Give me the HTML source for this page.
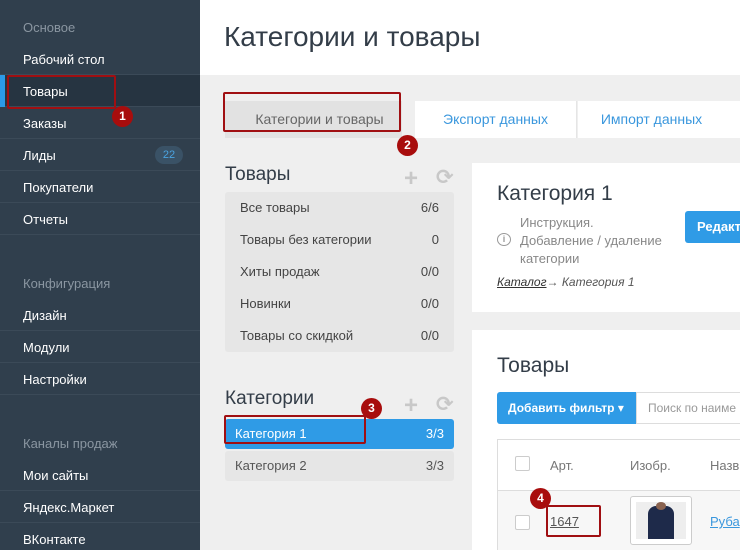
<!DOCTYPE html>
<html style="overflow:hidden;width:740px;height:550px"><head><meta charset="utf-8"><style>
*{margin:0;padding:0;box-sizing:border-box}
body{width:740px;height:550px;overflow:hidden;font-family:"Liberation Sans","DejaVu Sans",sans-serif;background:#efefef;position:relative;font-size:13px}
.a{position:absolute}
#sb{left:0;top:0;width:200px;height:550px;background:#303f4d}
.si{position:absolute;left:0;width:200px;height:32px;line-height:33px;padding-left:23px;color:#fff;font-size:13px;border-bottom:1px solid #3b4a58}
.sh{position:absolute;left:23px;color:#8a96a1;font-size:13px}
.red{position:absolute;border:2px solid #a00f12;border-radius:2px}
.badge{position:absolute;width:21px;height:21px;border-radius:50%;background:#a80d0d;color:#fff;font-weight:bold;font-size:12px;text-align:center;line-height:21px}
.row{position:absolute;left:0;width:229px;height:32px;line-height:32px;padding:0 15px;font-size:13px;color:#444;display:flex;justify-content:space-between}
</style></head><body>
<div id="sb" class="a">
<div class="sh" style="top:20px">Основое</div>
<div class="si" style="top:43px">Рабочий стол</div>
<div class="si" style="top:75px;background:#263441">Товары</div>
<div class="a" style="left:0;top:75px;width:5px;height:32px;background:#2b9ae8"></div>
<div class="si" style="top:107px">Заказы</div>
<div class="si" style="top:139px">Лиды</div>
<div class="a" style="left:155px;top:146px;width:28px;height:18px;border-radius:9px;background:#3a5266;color:#4aa3e0;font-size:11px;text-align:center;line-height:18px">22</div>
<div class="si" style="top:171px">Покупатели</div>
<div class="si" style="top:203px">Отчеты</div>
<div class="sh" style="top:276px">Конфигурация</div>
<div class="si" style="top:299px">Дизайн</div>
<div class="si" style="top:331px">Модули</div>
<div class="si" style="top:363px">Настройки</div>
<div class="sh" style="top:436px">Каналы продаж</div>
<div class="si" style="top:459px">Мои сайты</div>
<div class="si" style="top:491px">Яндекс.Маркет</div>
<div class="si" style="top:523px;border:none">ВКонтакте</div>
</div>
<div class="red" style="left:7px;top:75px;width:109px;height:34px"></div>
<div class="badge" style="left:112px;top:106px">1</div>

<div class="a" style="left:200px;top:0;width:540px;height:75px;background:#fff"></div>
<div class="a" style="left:224px;top:21px;font-size:28px;color:#333d48">Категории и товары</div>

<div class="a" style="left:225px;top:101px;width:177px;height:37px;background:#e2e2e2;color:#666;text-align:center;line-height:37px;font-size:14px;padding-left:12px">Категории и товары</div>
<div class="a" style="left:415px;top:101px;width:162px;height:37px;background:#fff;color:#3a97dd;text-align:center;line-height:37px;font-size:14px;border-right:1px solid #e5e5e5">Экспорт данных</div>
<div class="a" style="left:578px;top:101px;width:162px;height:37px;background:#fff;color:#3a97dd;text-align:center;line-height:37px;font-size:14px;padding-right:15px">Импорт данных</div>
<div class="red" style="left:223px;top:92px;width:178px;height:40px"></div>
<div class="badge" style="left:397px;top:135px">2</div>

<div class="a" style="left:225px;top:164px;font-size:19px;color:#333d48">Товары</div>
<div class="a" style="left:404px;top:167px;font-size:24px;line-height:24px;color:#c8c8c8;font-weight:bold">+</div>
<div class="a" style="left:436px;top:166px;font-size:21px;line-height:24px;color:#c8c8c8;font-weight:bold">⟳</div>
<div class="a" style="left:225px;top:192px;width:229px;height:160px;background:#e6e6e6;border-radius:3px">
<div class="row" style="top:0"><span>Все товары</span><span>6/6</span></div>
<div class="row" style="top:32px"><span>Товары без категории</span><span>0</span></div>
<div class="row" style="top:64px"><span>Хиты продаж</span><span>0/0</span></div>
<div class="row" style="top:96px"><span>Новинки</span><span>0/0</span></div>
<div class="row" style="top:128px"><span>Товары со скидкой</span><span>0/0</span></div>
</div>

<div class="a" style="left:225px;top:388px;font-size:19px;color:#333d48">Категории</div>
<div class="a" style="left:404px;top:394px;font-size:24px;line-height:24px;color:#c8c8c8;font-weight:bold">+</div>
<div class="a" style="left:436px;top:393px;font-size:21px;line-height:24px;color:#c8c8c8;font-weight:bold">⟳</div>
<div class="a" style="left:225px;top:419px;width:229px;height:30px;background:#2f9be6;border-radius:3px;color:#fff;font-size:13px;line-height:30px;padding:0 10px;display:flex;justify-content:space-between"><span>Категория 1</span><span>3/3</span></div>
<div class="a" style="left:225px;top:451px;width:229px;height:30px;background:#e6e6e6;border-radius:3px;color:#555;font-size:13px;line-height:30px;padding:0 10px;display:flex;justify-content:space-between"><span>Категория 2</span><span>3/3</span></div>
<div class="red" style="left:224px;top:415px;width:142px;height:29px"></div>
<div class="badge" style="left:361px;top:398px">3</div>

<div class="a" style="left:472px;top:163px;width:268px;height:149px;background:#fff"></div>
<div class="a" style="left:497px;top:182px;font-size:21px;color:#333d48">Категория 1</div>
<div class="a" style="left:520px;top:214px;font-size:13px;color:#888;line-height:18px">Инструкция.<br>Добавление / удаление<br>категории</div>
<div class="a" style="left:497px;top:233px;width:14px;height:13px;border:1.5px solid #999;border-radius:50%;color:#999;font-size:9px;text-align:center;line-height:10px;font-weight:bold">i</div>
<div class="a" style="left:497px;top:275px;font-size:12px;color:#555;font-style:italic"><u style="color:#333">Каталог</u>→ Категория 1</div>
<div class="a" style="left:685px;top:211px;width:60px;height:32px;background:#2f9be6;border-radius:3px;color:#fff;font-weight:bold;font-size:13px;line-height:32px;padding-left:12px">Редакти</div>

<div class="a" style="left:472px;top:330px;width:268px;height:220px;background:#fff"></div>
<div class="a" style="left:497px;top:354px;font-size:21px;color:#333d48">Товары</div>
<div class="a" style="left:497px;top:392px;width:139px;height:32px;background:#2f9be6;border-radius:3px 0 0 3px;color:#fff;font-weight:bold;font-size:12px;line-height:32px;padding-left:11px">Добавить фильтр ▾</div>
<div class="a" style="left:636px;top:392px;width:110px;height:32px;border:1px solid #ddd;color:#999;font-size:12px;line-height:30px;padding-left:11px;white-space:nowrap;overflow:hidden">Поиск по наиме</div>
<div class="a" style="left:497px;top:439px;width:250px;height:120px;border:1px solid #ddd"></div>
<div class="a" style="left:497px;top:490px;width:250px;height:1px;background:#ddd"></div>
<div class="a" style="left:498px;top:491px;width:250px;height:60px;background:#f7f7f7"></div>
<div class="a" style="left:515px;top:456px;width:15px;height:15px;border:1px solid #ccc;border-radius:2px;background:#fff"></div>
<div class="a" style="left:550px;top:458px;color:#777;font-size:13px">Арт.</div>
<div class="a" style="left:630px;top:458px;color:#777;font-size:13px">Изобр.</div>
<div class="a" style="left:710px;top:458px;color:#777;font-size:13px">Назв</div>
<div class="a" style="left:515px;top:515px;width:15px;height:15px;border:1px solid #ccc;border-radius:2px;background:#fff"></div>
<div class="a" style="left:550px;top:514px;color:#555;font-size:13px;text-decoration:underline">1647</div>
<div class="a" style="left:630px;top:496px;width:62px;height:49px;border:1px solid #ccc;border-radius:3px;background:#fff"></div>
<div class="a" style="left:636px;top:502px;width:50px;height:37px;background:#eee"><div class="a" style="left:12px;top:4px;width:26px;height:33px;background:#1e2a4a;border-radius:8px 8px 0 0"></div><div class="a" style="left:20px;top:0;width:10px;height:8px;background:#8a6350;border-radius:50%"></div></div>
<div class="a" style="left:710px;top:514px;color:#3a97dd;font-size:13px;text-decoration:underline">Руба</div>
<div class="red" style="left:546px;top:505px;width:55px;height:32px"></div>
<div class="badge" style="left:530px;top:488px">4</div>
</body></html>
